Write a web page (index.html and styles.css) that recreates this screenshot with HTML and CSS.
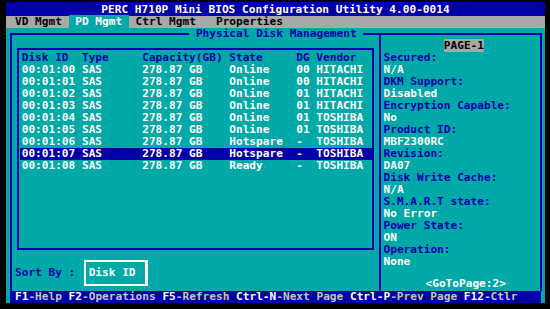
FILE: index.html
```html
<!DOCTYPE html>
<html lang="en">
<head>
    <meta charset="UTF-8">
    <meta name="viewport" content="width=device-width, initial-scale=1.0">
    <title>PERC H710P Mini BIOS Configuration Utility</title>
    <link rel="stylesheet" href="styles.css">
</head>
<body>
    <div class="screen">
        <div class="titlebar">PERC H710P Mini BIOS Configuration Utility 4.00-0014</div>

        <div class="menubar"><span class="tab"> VD Mgmt </span><span class="tab active"> PD Mgmt </span><span class="tab"> Ctrl Mgmt </span><span class="tab">  Properties</span></div>

        <div class="main">
            <div class="frame">
                <span class="legend"> Physical Disk Management </span>

                <div class="left">
                    <div class="tablebox">
                        <div class="row head">
                            <span>Disk ID</span><span>Type</span><span>Capacity(GB)</span><span>State</span><span>DG</span><span>Vendor</span>
                        </div>
                        <div class="row">
                            <span>00:01:00</span><span>SAS</span><span>278.87 GB</span><span>Online</span><span>00</span><span>HITACHI</span>
                        </div>
                        <div class="row">
                            <span>00:01:01</span><span>SAS</span><span>278.87 GB</span><span>Online</span><span>00</span><span>HITACHI</span>
                        </div>
                        <div class="row">
                            <span>00:01:02</span><span>SAS</span><span>278.87 GB</span><span>Online</span><span>01</span><span>HITACHI</span>
                        </div>
                        <div class="row">
                            <span>00:01:03</span><span>SAS</span><span>278.87 GB</span><span>Online</span><span>01</span><span>HITACHI</span>
                        </div>
                        <div class="row">
                            <span>00:01:04</span><span>SAS</span><span>278.87 GB</span><span>Online</span><span>01</span><span>TOSHIBA</span>
                        </div>
                        <div class="row">
                            <span>00:01:05</span><span>SAS</span><span>278.87 GB</span><span>Online</span><span>01</span><span>TOSHIBA</span>
                        </div>
                        <div class="row">
                            <span>00:01:06</span><span>SAS</span><span>278.87 GB</span><span>Hotspare</span><span>-</span><span>TOSHIBA</span>
                        </div>
                        <div class="row selected">
                            <span>00:01:07</span><span>SAS</span><span>278.87 GB</span><span>Hotspare</span><span>-</span><span>TOSHIBA</span>
                        </div>
                        <div class="row">
                            <span>00:01:08</span><span>SAS</span><span>278.87 GB</span><span>Ready</span><span>-</span><span>TOSHIBA</span>
                        </div>
                    </div>

                    <div class="sortrow">
                        <span class="sortlabel">Sort By :</span>
                        <div class="sortbox">Disk ID</div>
                    </div>
                </div>

                <div class="right">
                    <div class="page"><span>PAGE-1</span></div>
                    <dl class="props">
                        <dt>Secured:</dt><dd>N/A</dd>
                        <dt>DKM Support:</dt><dd>Disabled</dd>
                        <dt>Encryption Capable:</dt><dd>No</dd>
                        <dt>Product ID:</dt><dd>MBF2300RC</dd>
                        <dt>Revision:</dt><dd>DA07</dd>
                        <dt>Disk Write Cache:</dt><dd>N/A</dd>
                        <dt>S.M.A.R.T state:</dt><dd>No Error</dd>
                        <dt>Power State:</dt><dd>ON</dd>
                        <dt>Operation:</dt><dd>None</dd>
                    </dl>
                    <div class="goto">&lt;GoToPage:2&gt;</div>
                </div>
            </div>
        </div>

        <div class="footer">
            <div class="keys"><b>F1</b>-Help <b>F2</b>-Operations <b>F5</b>-Refresh <b>Ctrl-N</b>-Next Page <b>Ctrl-P</b>-Prev Page <b>F12</b>-Ctlr</div>
        </div>
    </div>
</body>
</html>
```

FILE: styles.css
```css
body {
    margin: 0;
    padding: 0;
    background: #000;
    font-family: 'DejaVu Sans Mono', 'Liberation Mono', monospace;
    font-size: 11.13px;
    font-weight: bold;
    line-height: 12px;
    color: #fff;
    overflow: hidden;
}
.screen {
    width: 539px;
    margin: 2px 0 0 6px;
    display: flex;
    flex-direction: column;
}
.titlebar {
    height: 14px;
    box-sizing: border-box;
    padding-top: 2px;
    background: #0000a8;
    color: #fff;
    text-align: center;
}
.menubar {
    height: 12px;
    padding-left: 2.3px;
    background: #a8a8a8;
    color: #000;
}
.tab {
    white-space: pre;
}
.tab.active {
    background: #00a8a8;
    color: #fff;
}
.main {
    height: 263px;
    box-sizing: border-box;
    padding: 5px 3px 0 4px;
    background: #00a8a8;
}
.frame {
    position: relative;
    display: flex;
    height: 258px;
    box-sizing: border-box;
    border: 2px solid #0000a8;
    border-bottom: none;
}
.legend {
    position: absolute;
    top: -7px;
    left: 177.2px;
    white-space: pre;
    background: #00a8a8;
    color: #0000a8;
}
.left {
    width: 367px;
    border-right: 2px solid #0000a8;
}
.tablebox {
    width: 357px;
    height: 202px;
    box-sizing: border-box;
    margin: 13px 0 0 5px;
    padding-top: 2px;
    border: 2px solid #0000a8;
}
.row {
    display: grid;
    grid-template-columns: 9ch 9ch 13ch 10ch 3ch auto;
    margin-left: 1px;
    padding-left: 1.7px;
    height: 12px;
    white-space: nowrap;
}
.row.head {
    color: #0000a8;
}
.row.selected {
    background: #0000a8;
}
.sortrow {
    display: flex;
    align-items: center;
    margin-top: 10px;
    padding-left: 3px;
}
.sortlabel {
    width: 9ch;
    color: #0000a8;
}
.sortbox {
    width: 64px;
    height: 26px;
    box-sizing: border-box;
    margin-left: 8.7px;
    padding: 5px 0 0 2.7px;
    border: 2px solid #fff;
    border-right-width: 3px;
    color: #fff;
}
.right {
    flex: 1;
    padding-left: 2.5px;
}
.page {
    padding: 5px 0 0 60.3px;
    height: 12px;
}
.page span {
    background: #a8a8a8;
    color: #000;
}
.props {
    margin: 0;
}
.props dt {
    color: #0000a8;
}
.props dd {
    margin: 0;
    color: #fff;
}
.goto {
    margin-top: 10px;
    padding-left: 42px;
    line-height: 11px;
}
.footer {
    height: 12px;
    background: #00a8a8;
}
.keys {
    height: 12px;
    margin: 0 4px 0 4px;
    padding-left: 5px;
    background: #0000a8;
    color: #c4c4c4;
    white-space: pre;
}
.keys b {
    color: #fff;
}
```
